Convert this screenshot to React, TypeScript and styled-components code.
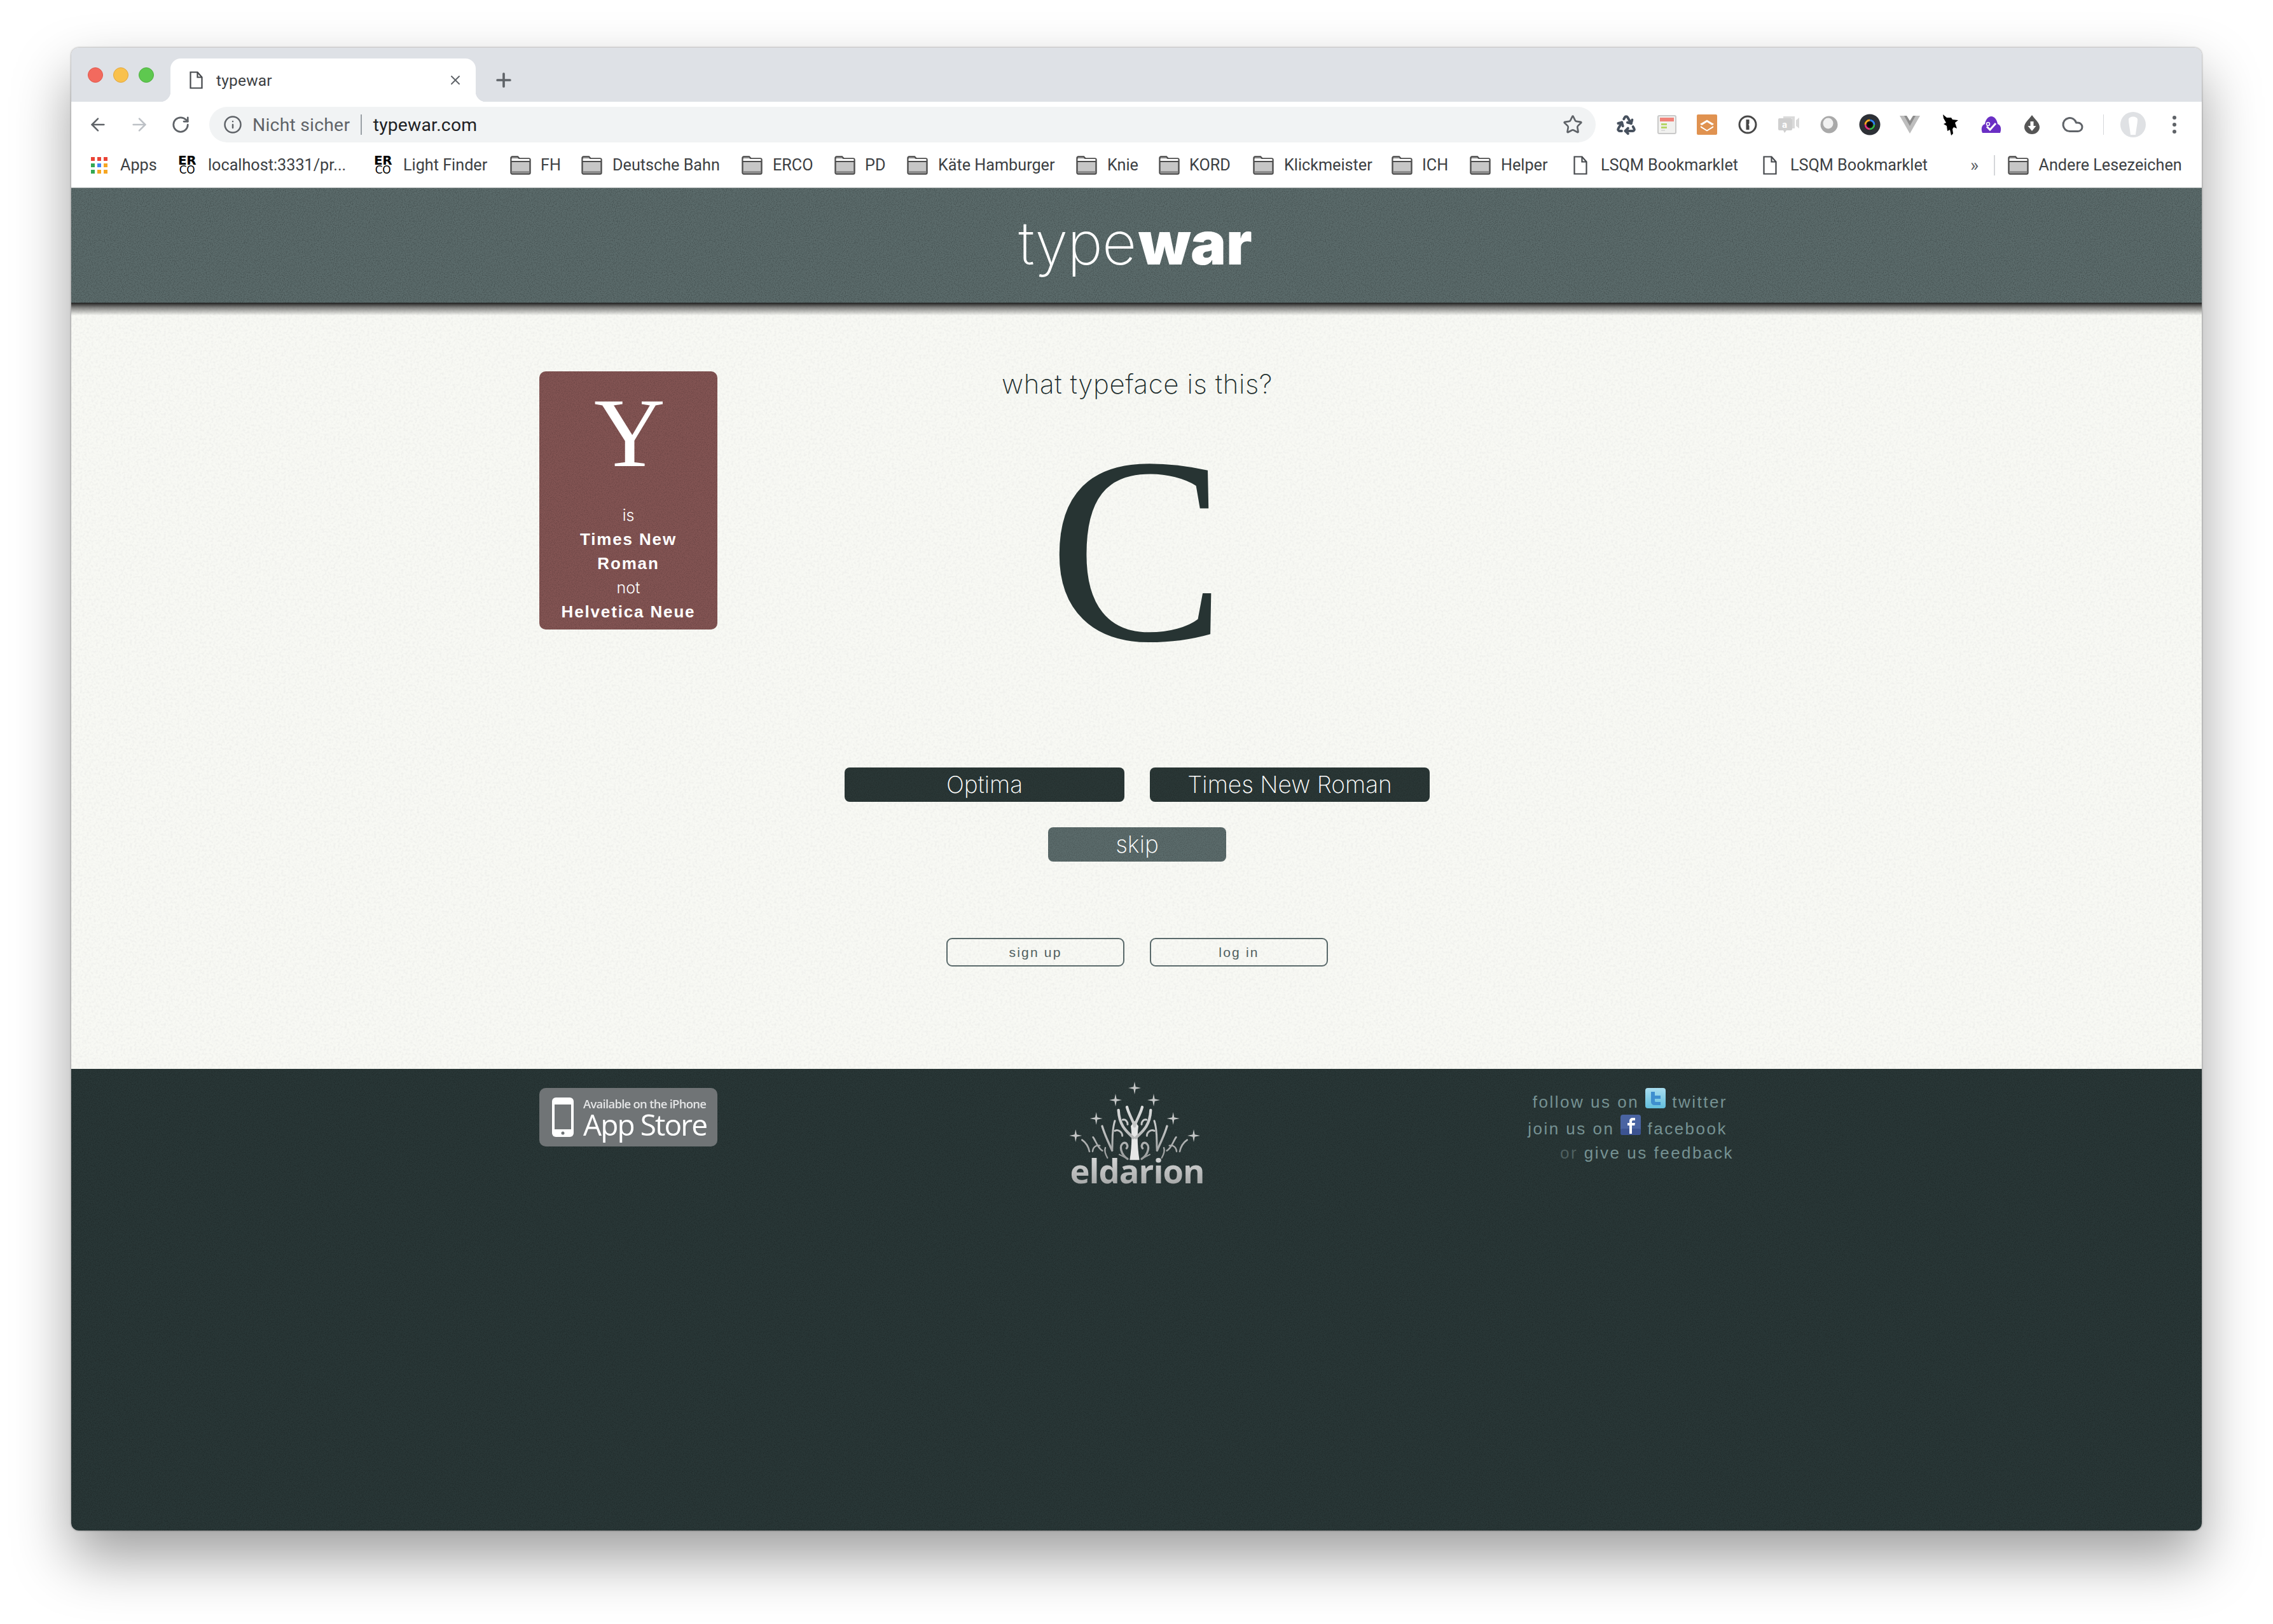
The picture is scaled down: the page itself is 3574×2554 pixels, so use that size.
import React from 'react';
import styled, { createGlobalStyle, css } from 'styled-components';
import { ArrowLeft, ArrowRight, RotateCw, Info, Star, Plus, X, Recycle, Cloud } from 'lucide-react';

const noiseUri = (freq: number, tone: string, op: number) =>
  `url("data:image/svg+xml,${encodeURIComponent(
    `<svg xmlns='http://www.w3.org/2000/svg' width='320' height='320'><filter id='n'><feTurbulence type='fractalNoise' baseFrequency='${freq}' numOctaves='2' stitchTiles='stitch'/><feColorMatrix values='0 0 0 0 ${tone} 0 0 0 0 ${tone} 0 0 0 0 ${tone} 0 0 0 ${op} ${-op * 0.4}'/></filter><rect width='320' height='320' filter='url(#n)'/></svg>`
  )}")`;

const GlobalStyle = createGlobalStyle`
  html, body { margin: 0; padding: 0; background: #fff; }
  * { box-sizing: border-box; }
  body { font-family: Roboto, "Liberation Sans", sans-serif; }
`;

const Desktop = styled.div`
  width: 3574px;
  height: 2554px;
  padding: 75px 112px 0;
  overflow: hidden;
  background: #fff;
`;

const Window = styled.div`
  width: 3350px;
  height: 2332px;
  border-radius: 12px;
  overflow: hidden;
  display: flex;
  flex-direction: column;
  box-shadow: 0 44px 90px 0 rgba(0, 0, 0, 0.38), 0 0 3px rgba(0, 0, 0, 0.45);
`;

const TabStrip = styled.div`
  height: 85px;
  flex: none;
  background: #dee1e6;
  display: flex;
  align-items: flex-end;
  padding-left: 26px;
`;

const Lights = styled.div`
  display: flex;
  gap: 16px;
  align-self: flex-start;
  margin-top: 31px;
  margin-right: 26px;
`;

const Light = styled.span<{ $c: string; $b: string }>`
  width: 24px;
  height: 24px;
  border-radius: 50%;
  background: ${(p) => p.$c};
  border: 1px solid ${(p) => p.$b};
`;

const Tab = styled.div`
  position: relative;
  width: 480px;
  height: 68px;
  background: #fff;
  border-radius: 16px 16px 0 0;
  display: flex;
  align-items: center;
  padding: 0 20px 0 30px;
  color: #3c4043;
  font-size: 24.5px;
  &::before,
  &::after {
    content: '';
    position: absolute;
    bottom: 0;
    width: 16px;
    height: 16px;
  }
  &::before {
    left: -16px;
    background: radial-gradient(circle at 0 0, transparent 16px, #fff 16.5px);
  }
  &::after {
    right: -16px;
    background: radial-gradient(circle at 100% 0, transparent 16px, #fff 16.5px);
  }
`;

const TabTitle = styled.span`
  margin-left: 21px;
  flex: 1;
  letter-spacing: 0.2px;
`;

const NewTab = styled.div`
  margin-left: 27px;
  align-self: center;
  display: flex;
  color: #5f6368;
  margin-top: 16px;
`;

const Toolbar = styled.div`
  height: 64px;
  flex: none;
  background: #fff;
  padding-top: 8px;
  display: flex;
  align-items: flex-start;
  padding-left: 26px;
`;

const NavIcon = styled.div<{ $c?: string }>`
  width: 32px;
  height: 56px;
  margin-right: 33px;
  display: flex;
  align-items: center;
  justify-content: center;
  color: ${(p) => p.$c || '#5f6368'};
`;

const AddressBar = styled.div`
  width: 2180px;
  height: 56px;
  margin-left: -4px;
  border-radius: 28px;
  background: #f1f3f4;
  display: flex;
  align-items: center;
  padding: 0 20px 0 22px;
  font-size: 28.3px;
`;

const Security = styled.span`
  color: #5f6368;
  margin-left: 16px;
  letter-spacing: 0.25px;
`;

const Divider = styled.span`
  width: 1.5px;
  height: 32px;
  margin: 0 18px 0 17px;
  background: #9aa0a6;
`;

const Url = styled.span`
  color: #202124;
  flex: 1;
  letter-spacing: 0.2px;
`;

const Extensions = styled.div`
  display: flex;
  margin-left: 16px;
  height: 56px;
  align-items: center;
`;

const ExtSlot = styled.div`
  width: 63.8px;
  height: 56px;
  display: flex;
  align-items: center;
  justify-content: center;
`;

const ToolSep = styled.span`
  width: 1.5px;
  height: 32px;
  background: #d5d7da;
  margin-left: 16px;
`;

const Avatar = styled.div`
  margin-left: 26px;
  width: 40px;
  height: 40px;
  display: flex;
`;

const Kebab = styled.div`
  margin-left: 42px;
  display: flex;
  flex-direction: column;
  gap: 5px;
  span {
    width: 6px;
    height: 6px;
    border-radius: 50%;
    background: #5f6368;
  }
`;

const BookmarkBar = styled.div`
  height: 71px;
  flex: none;
  background: #fff;
  display: flex;
  align-items: center;
  padding: 0 0 0 31px;
  color: #3c4043;
  font-size: 25.2px;
`;

const Bookmark = styled.div<{ $w: number }>`
  width: ${(p) => p.$w}px;
  flex: none;
  display: flex;
  align-items: center;
  white-space: nowrap;
`;

const BookmarkLabel = styled.span<{ $gap: number }>`
  margin-left: ${(p) => p.$gap}px;
`;

const Chevrons = styled.span`
  width: 37px;
  color: #5f6368;
  font-size: 28px;
`;

const BarSep = styled.span`
  width: 1.5px;
  height: 32px;
  background: #d5d7da;
  margin-right: 20px;
`;

const FavStack = styled.div`
  width: 28px;
  font-family: 'DejaVu Sans', sans-serif;
  color: #000;
  display: flex;
  flex-direction: column;
  align-items: center;
  line-height: 15px;
`;

const FavTop = styled.span`
  font-size: 20px;
  font-weight: 700;
  letter-spacing: -0.5px;
`;

const FavBottom = styled.span`
  font-size: 17px;
  letter-spacing: -0.5px;
`;

const Page = styled.div`
  flex: 1;
  display: flex;
  flex-direction: column;
  min-height: 0;
  border-top: 1px solid #8b9494;
`;

const Header = styled.header`
  height: 180px;
  flex: none;
  position: relative;
  background: ${noiseUri(0.6, '0', 0.5)}, #5b6b6b;
  display: flex;
  align-items: center;
  justify-content: center;
  color: #fff;
  &::after {
    content: '';
    position: absolute;
    left: 0;
    right: 0;
    top: 100%;
    height: 20px;
    background: linear-gradient(rgba(20, 20, 20, 0.95), rgba(40, 40, 40, 0.55) 40%, rgba(120, 120, 110, 0) 100%);
  }
`;

const Logo = styled.h1`
  margin: 0;
  font-family: Inter, sans-serif;
  font-size: 94px;
  line-height: 1;
  font-weight: 200;
  display: flex;
  margin-top: -8px;
  margin-left: -4px;
  letter-spacing: -1px;
  b {
    font-weight: 900;
    margin-left: 4px;
    letter-spacing: 0;
  }
`;

const Main = styled.main`
  height: 1205px;
  flex: none;
  background: ${noiseUri(0.28, '0.7', 0.7)}, #f8f9f4;
  padding-top: 98px;
`;

const columns = css`
  width: 1880px;
  margin-left: 736px;
  display: grid;
  grid-template-columns: 280px 1fr 280px;
`;

const MainGrid = styled.div`
  ${columns}
`;

const Card = styled.aside`
  margin-top: 10px;
  width: 280px;
  height: 406px;
  border-radius: 10px;
  background: ${noiseUri(0.7, '0', 0.4)}, #835453;
  color: #fff;
  display: flex;
  flex-direction: column;
  align-items: center;
  font-size: 25px;
  line-height: 38px;
`;

const CardGlyph = styled.div`
  font-family: 'Liberation Serif', serif;
  font-size: 155px;
  line-height: 155px;
  height: 187px;
  margin-top: 20px;
  margin-left: 4px;
`;

const CardLight = styled.span`
  font-family: Inter, sans-serif;
  font-weight: 300;
`;

const CardBold = styled.span`
  font-family: 'Liberation Sans', sans-serif;
  font-size: 26px;
  font-weight: 700;
  letter-spacing: 1.85px;
  text-align: center;
`;

const Center = styled.section`
  display: flex;
  flex-direction: column;
  align-items: center;
`;

const Question = styled.h2`
  margin: 0;
  font-family: Inter, sans-serif;
  font-weight: 250;
  font-size: 42px;
  line-height: 60px;
  color: #1f2f2f;
  letter-spacing: 0.6px;
`;

const BigGlyph = styled.div`
  font-family: 'Liberation Serif', serif;
  font-size: 418px;
  line-height: 418px;
  height: 573px;
  padding-top: 22px;
  color: #273433;
`;

const ButtonRow = styled.div`
  display: flex;
  gap: 40px;
  justify-content: center;
`;

const Solid = styled.button<{ $w: number; $tone: string }>`
  width: ${(p) => p.$w}px;
  height: 54px;
  border: 0;
  border-radius: 8px;
  padding: 0;
  background: ${noiseUri(0.7, '0', 0.4)}, ${(p) => p.$tone};
  color: #fff;
  font-family: Inter, sans-serif;
  font-weight: 250;
  font-size: 37px;
  line-height: 54px;
`;

const Skip = styled(Solid)`
  margin-top: 40px;
`;

const AuthRow = styled(ButtonRow)`
  margin-top: 120px;
`;

const Outline = styled.button`
  width: 280px;
  height: 45px;
  border: 2px solid #59696a;
  border-radius: 9px;
  background: transparent;
  padding: 0;
  color: #4f5f60;
  font-family: 'Liberation Sans', sans-serif;
  font-size: 21px;
  letter-spacing: 2.2px;
`;

const Footer = styled.footer`
  flex: 1;
  background: ${noiseUri(0.7, '0', 0.5)}, #293737;
  padding-top: 30px;
`;

const FooterGrid = styled.div`
  ${columns}
`;

const Badge = styled.div`
  width: 280px;
  height: 92px;
  border-radius: 10px;
  background: #707476;
  color: #fff;
  display: flex;
  align-items: flex-start;
  padding: 15px 0 0 20px;
  font-family: 'Open Sans', sans-serif;
  filter: blur(0.5px);
`;

const BadgeText = styled.div`
  margin-left: 15px;
  display: flex;
  flex-direction: column;
`;

const BadgeSmall = styled.span`
  font-size: 18.5px;
  font-weight: 600;
  line-height: 19px;
  letter-spacing: -0.75px;
  color: #e4e5e6;
`;

const BadgeBig = styled.span`
  font-size: 46px;
  line-height: 46px;
  letter-spacing: -1.9px;
  font-weight: 500;
`;

const Eldarion = styled.div`
  display: flex;
  flex-direction: column;
  align-items: center;
  margin-top: -30px;
  filter: blur(0.6px);
`;

const EldarionName = styled.span`
  margin-top: -84px;
  font-family: 'Open Sans', sans-serif;
  font-weight: 700;
  font-size: 52.5px;
  line-height: 68px;
  letter-spacing: -1px;
  background: linear-gradient(#e2e3e3, #9a9c9c);
  -webkit-background-clip: text;
  background-clip: text;
  color: transparent;
`;

const Social = styled.div`
  margin-left: -60px;
  font-family: 'Liberation Sans', sans-serif;
  font-size: 26px;
  letter-spacing: 2.5px;
  color: #769293;
  text-align: right;
  display: flex;
  flex-direction: column;
  align-items: flex-end;
  white-space: nowrap;
`;

const SocialLine = styled.div<{ $h: number; $pad: number }>`
  height: ${(p) => p.$h}px;
  padding-right: ${(p) => p.$pad}px;
  display: flex;
  align-items: flex-end;
  gap: 10px;
`;

const Muted = styled.span`
  color: #4f6060;
`;

const SocialIcon = styled.svg`
  margin-bottom: 6px;
`;

const folder = (
  <svg width="33" height="30" viewBox="0 0 33 30">
    <path d="M1.5 3.5a2 2 0 0 1 2-2H12l3 3h14.5a2 2 0 0 1 2 2v20a2 2 0 0 1-2 2h-26a2 2 0 0 1-2-2z" fill="#c6c6c6" stroke="#4d4d4d" strokeWidth="2.4" />
    <rect x="2.6" y="24" width="27.8" height="3.6" fill="#8e8e8e" />
    <rect x="2.6" y="5" width="27.8" height="3.4" fill="#fff" />
    <path d="M1.5 9h30" stroke="#4d4d4d" strokeWidth="2" />
  </svg>
);

const fileIcon = (
  <svg width="22" height="30" viewBox="0 0 22 30" fill="#fff" stroke="#45484c" strokeWidth="2.2">
    <path d="M1.5 1.5h12l7 8v19h-19z" />
    <path d="M13.5 1.5v8h7" fill="none" />
  </svg>
);

const appsIcon = (
  <svg width="26" height="26" viewBox="0 0 26 26">
    {[
      ['#ea4335', '#ea4335', '#ea4335'],
      ['#34a853', '#4285f4', '#f5a623'],
      ['#34a853', '#f5a623', '#f5a623'],
    ].map((row, y) =>
      row.map((c, x) => <rect key={`${x}-${y}`} x={x * 10} y={y * 10} width="6" height="6" fill={c} />)
    )}
  </svg>
);

const erIcon = (
  <FavStack>
    <FavTop>ER</FavTop>
    <FavBottom>CO</FavBottom>
  </FavStack>
);

type Mark = { label: string; w: number; icon: React.ReactNode; gap: number };

const marks: Mark[] = [
  { label: 'Apps', w: 137, icon: appsIcon, gap: 20 },
  { label: 'localhost:3331/pr...', w: 308, icon: erIcon, gap: 19 },
  { label: 'Light Finder', w: 214, icon: erIcon, gap: 18 },
  { label: 'FH', w: 112, icon: folder, gap: 15 },
  { label: 'Deutsche Bahn', w: 252, icon: folder, gap: 16 },
  { label: 'ERCO', w: 146, icon: folder, gap: 16 },
  { label: 'PD', w: 114, icon: folder, gap: 15 },
  { label: 'Käte Hamburger', w: 266, icon: folder, gap: 16 },
  { label: 'Knie', w: 130, icon: folder, gap: 16 },
  { label: 'KORD', w: 148, icon: folder, gap: 15 },
  { label: 'Klickmeister', w: 218, icon: folder, gap: 16 },
  { label: 'ICH', w: 123, icon: folder, gap: 15 },
  { label: 'Helper', w: 163, icon: folder, gap: 16 },
  { label: 'LSQM Bookmarklet', w: 298, icon: fileIcon, gap: 21 },
  { label: 'LSQM Bookmarklet', w: 326, icon: fileIcon, gap: 21 },
];

const extensions: React.ReactNode[] = [
  <Recycle key="r" size={34} color="#47515e" strokeWidth={2.8} />,
  <svg key="cal" width="30" height="30" viewBox="0 0 30 30">
    <rect x="1" y="1" width="28" height="28" rx="2" fill="#f1f1ef" stroke="#c9c9c9" strokeWidth="2" />
    <rect x="4" y="4" width="22" height="6" fill="#f0837a" />
    <rect x="6" y="13" width="9" height="3" fill="#b6d667" />
    <rect x="6" y="18" width="9" height="3" fill="#b6d667" />
    <rect x="6" y="23" width="6" height="2" fill="#dcdcdc" />
  </svg>,
  <svg key="o" width="32" height="32" viewBox="0 0 32 32">
    <rect width="32" height="32" rx="2" fill="#e09250" />
    <path d="M16 8.500 27 15l-3 2-8-5-8 5-3-2z" fill="#fff" />
    <path d="M6 18l10 6.500L26 18v2.500l-10 6-10-6z" fill="#fff" />
  </svg>,
  <svg key="1p" width="30" height="30" viewBox="0 0 30 30">
    <circle cx="15" cy="15" r="13" fill="#fff" stroke="#474747" strokeWidth="3" />
    <path d="M12.500 7h5v6l-1.200 2 1.200 2v6h-5z" fill="#474747" />
  </svg>,
  <svg key="a" width="34" height="28" viewBox="0 0 34 28">
    <path d="M3 4h18a2 2 0 0 1 2 2v15a2 2 0 0 1-2 2h-7l-3 4-2-4H3a2 2 0 0 1-2-2V6a2 2 0 0 1 2-2z" fill="#cfcfcf" />
    <path d="M9 1h18v19H23V4H9z" fill="#dadada" />
    <path d="M29 7l5-4v17l-5-4z" fill="#dadada" />
    <text x="7" y="19" fontFamily="Roboto, sans-serif" fontSize="15" fontWeight="700" fill="#fff">a</text>
  </svg>,
  <svg key="ring" width="30" height="30" viewBox="0 0 30 30">
    <circle cx="15" cy="15" r="13.500" fill="#a9a9a9" />
    <ellipse cx="13.500" cy="13" rx="8" ry="8.500" fill="#f1f1f1" />
  </svg>,
  <svg key="cam" width="34" height="34" viewBox="0 0 34 34">
    <circle cx="17" cy="17" r="16.500" fill="#2d3036" />
    <circle cx="17" cy="17" r="9" fill="#111" />
    <circle cx="17" cy="17" r="7" fill="none" stroke="#35b34a" strokeWidth="3" strokeDasharray="11 33" />
    <circle cx="17" cy="17" r="7" fill="none" stroke="#e0337f" strokeWidth="3" strokeDasharray="11 33" strokeDashoffset="-11" />
    <circle cx="17" cy="17" r="7" fill="none" stroke="#f5a623" strokeWidth="3" strokeDasharray="11 33" strokeDashoffset="-22" />
    <circle cx="17" cy="17" r="7" fill="none" stroke="#2f80ed" strokeWidth="3" strokeDasharray="11 33" strokeDashoffset="-33" />
    <circle cx="17" cy="17" r="3" fill="#060606" />
  </svg>,
  <svg key="v" width="32" height="28" viewBox="0 0 32 28">
    <path d="M0 0h32L16 28z" fill="#bdbdbd" />
    <path d="M7 0h18L16 16z" fill="#8c8c8c" />
    <path d="M11 0h10l-5 8z" fill="#fff" />
  </svg>,
  <svg key="n" width="30" height="33" viewBox="0 0 30 33">
    <path d="M3 0l6 5h7l2 3 9 1-5 4 3 9-5-2-2 3 1 7-3 3-2-9-4 2-1-8-5-3 4-2-4-7z" fill="#000" />
  </svg>,
  <svg key="p" width="32" height="26" viewBox="0 0 32 26">
    <path d="M2 26c-2-5-2-12 4-14 1-7 5-12 10-12s9 5 10 12c6 2 6 9 4 14z" fill="#6a2fc4" />
    <path d="M9 16l5 5 9-10" fill="none" stroke="#fff" strokeWidth="3" />
    <circle cx="11" cy="12" r="2.500" fill="none" stroke="#fff" strokeWidth="1.500" />
  </svg>,
  <svg key="d" width="24" height="30" viewBox="0 0 24 30">
    <path d="M12 0c5 7 12 12 12 19a12 11 0 0 1-24 0C0 12 7 7 12 0z" fill="#555" />
    <path d="M9.500 10h5v7h4L12 25l-6.500-8h4z" fill="#fff" />
  </svg>,
  <Cloud key="c" size={36} color="#5f6368" strokeWidth={2} />,
];

const branches = (
  <g fill="none" stroke="url(#treeShade)" strokeLinecap="round">
    <path d="M378 270C365 232 350 212 342 180" strokeWidth="13" />
    <path d="M372 325C340 295 306 270 302 195" strokeWidth="13" />
    <path d="M322 240C336 236 346 250 345 262" strokeWidth="9" />
    <path d="M225 270C240 320 258 352 272 385" strokeWidth="10" />
    <path d="M272 385C276 340 268 300 285 245" strokeWidth="9" />
    <path d="M285 292C300 285 320 296 320 316" strokeWidth="9" />
    <path d="M130 335C146 346 160 365 165 390" strokeWidth="8" />
    <path d="M182 322C196 340 202 372 226 386" strokeWidth="8" />
    <path d="M214 362C194 358 180 372 180 390" strokeWidth="7" />
    <path d="M240 372C234 386 240 402 250 420" strokeWidth="7" />
    <path d="M345 425C312 402 304 362 325 350C340 345 350 362 340 375" strokeWidth="10" />
    <path d="M306 404L345 424" strokeWidth="6" />
  </g>
);

const starPoints: [number, number][] = [
  [378, 90],
  [288, 147],
  [468, 147],
  [197, 234],
  [560, 234],
  [100, 315],
  [657, 315],
];

const App = () => (
  <Desktop>
    <GlobalStyle />
    <Window>
      <TabStrip>
        <Lights>
          <Light $c="#f26a5e" $b="#e2574c" />
          <Light $c="#f9c14d" $b="#e1a73e" />
          <Light $c="#5ec84f" $b="#4fb03f" />
        </Lights>
        <Tab>
          <svg width="21" height="28" viewBox="0 0 21 28" fill="none" stroke="#45484c" strokeWidth="2.2">
            <path d="M1.500 1.500h11l7 8v17h-18z" />
            <path d="M12.500 1.500v8h7" />
          </svg>
          <TabTitle>typewar</TabTitle>
          <X size={24} color="#5f6368" strokeWidth={2} />
        </Tab>
        <NewTab>
          <Plus size={34} strokeWidth={2.6} />
        </NewTab>
      </TabStrip>
      <Toolbar>
        <NavIcon>
          <ArrowLeft size={36} strokeWidth={1.9} />
        </NavIcon>
        <NavIcon $c="#bdc1c6">
          <ArrowRight size={36} strokeWidth={1.9} />
        </NavIcon>
        <NavIcon>
          <RotateCw size={30} strokeWidth={2.2} />
        </NavIcon>
        <AddressBar>
          <Info size={30} color="#5f6368" strokeWidth={2} />
          <Security>Nicht sicher</Security>
          <Divider />
          <Url>typewar.com</Url>
          <Star size={32} color="#5f6368" strokeWidth={2} />
        </AddressBar>
        <Extensions>
          {extensions.map((e, i) => (
            <ExtSlot key={i}>{e}</ExtSlot>
          ))}
          <ToolSep />
          <Avatar>
            <svg width="40" height="40" viewBox="0 0 40 40">
              <circle cx="20" cy="20" r="20" fill="#dfe1e4" />
              <path d="M13 12c0-6 14-6 14 0 0 6-2 14-3 24h-8c-1-10-3-18-3-24z" fill="#fff" />
            </svg>
          </Avatar>
          <Kebab>
            <span />
            <span />
            <span />
          </Kebab>
        </Extensions>
      </Toolbar>
      <BookmarkBar>
        {marks.map((m, i) => (
          <Bookmark key={i} $w={m.w}>
            {m.icon}
            <BookmarkLabel $gap={m.gap}>{m.label}</BookmarkLabel>
          </Bookmark>
        ))}
        <Chevrons>»</Chevrons>
        <BarSep />
        <Bookmark $w={290}>
          {folder}
          <BookmarkLabel $gap={16}>Andere Lesezeichen</BookmarkLabel>
        </Bookmark>
      </BookmarkBar>
      <Page>
        <Header>
          <Logo>
            type<b>war</b>
          </Logo>
        </Header>
        <Main>
          <MainGrid>
            <Card>
              <CardGlyph>Y</CardGlyph>
              <CardLight>is</CardLight>
              <CardBold>
                Times New
                <br />
                Roman
              </CardBold>
              <CardLight>not</CardLight>
              <CardBold>Helvetica Neue</CardBold>
            </Card>
            <Center>
              <Question>what typeface is this?</Question>
              <BigGlyph>C</BigGlyph>
              <ButtonRow>
                <Solid $w={440} $tone="#2a3736">Optima</Solid>
                <Solid $w={440} $tone="#2a3736">Times New Roman</Solid>
              </ButtonRow>
              <Skip $w={280} $tone="#5b6b6b">skip</Skip>
              <AuthRow>
                <Outline>sign up</Outline>
                <Outline>log in</Outline>
              </AuthRow>
            </Center>
          </MainGrid>
        </Main>
        <Footer>
          <FooterGrid>
            <Badge>
              <svg width="34" height="62" viewBox="0 0 34 62">
                <rect width="34" height="62" rx="6" fill="#fff" />
                <rect x="4" y="11" width="26" height="39" fill="#707476" />
                <circle cx="17" cy="56" r="2.500" fill="#707476" />
              </svg>
              <BadgeText>
                <BadgeSmall>Available on the iPhone</BadgeSmall>
                <BadgeBig>App Store</BadgeBig>
              </BadgeText>
            </Badge>
            <Center>
              <Eldarion>
                <svg width="260" height="210" viewBox="0 0 780 630">
                  <defs>
                    <linearGradient id="treeShade" gradientUnits="userSpaceOnUse" x1="0" y1="180" x2="0" y2="430">
                      <stop offset="0" stopColor="#dcdddd" />
                      <stop offset="1" stopColor="#989b9b" />
                    </linearGradient>
                  </defs>
                  {starPoints.map(([x, y]) => (
                    <path
                      key={`${x}-${y}`}
                      transform={`translate(${x} ${y})`}
                      d="M0-30 5-5 30 0 5 5 0 30-5 5-30 0-5-5z"
                      fill="#c4c6c6"
                    />
                  ))}
                  <path d="M355 430C365 370 366 310 360 270L378 245 396 270C390 310 391 370 401 430z" fill="#e6e7e7" />
                  {branches}
                  <g transform="translate(756 0) scale(-1 1)">{branches}</g>
                </svg>
                <EldarionName>eldarion</EldarionName>
              </Eldarion>
            </Center>
            <Social>
              <SocialLine $h={38} $pad={12}>
                <span>follow us on</span>
                <SocialIcon width="32" height="32" viewBox="0 0 32 32">
                  <defs>
                    <linearGradient id="tw" x1="0" y1="0" x2="0" y2="1">
                      <stop offset="0" stopColor="#a9def0" />
                      <stop offset="1" stopColor="#62bedc" />
                    </linearGradient>
                  </defs>
                  <rect width="32" height="32" rx="4" fill="url(#tw)" />
                  <path d="M9 6h6v6h9v5h-9v3c0 2 1 2 3 2h6v5h-9c-4 0-6-2-6-6z" fill="#3f8fcf" />
                </SocialIcon>
                <span>twitter</span>
              </SocialLine>
              <SocialLine $h={42} $pad={12}>
                <span>join us on</span>
                <SocialIcon width="32" height="32" viewBox="0 0 32 32">
                  <rect width="32" height="32" rx="4" fill="#4a64a2" />
                  <rect y="22" width="32" height="10" rx="3" fill="#3c5391" />
                  <path d="M14 30V17h-3v-4h3v-3c0-3 2-5 5-5h4v4h-3c-1 0-2 .5-2 2v2h5l-.7 4H18v13z" fill="#fff" />
                </SocialIcon>
                <span>facebook</span>
              </SocialLine>
              <SocialLine $h={38} $pad={2}>
                <span>
                  <Muted>or</Muted> give us feedback
                </span>
              </SocialLine>
            </Social>
          </FooterGrid>
        </Footer>
      </Page>
    </Window>
  </Desktop>
);

export default App;
